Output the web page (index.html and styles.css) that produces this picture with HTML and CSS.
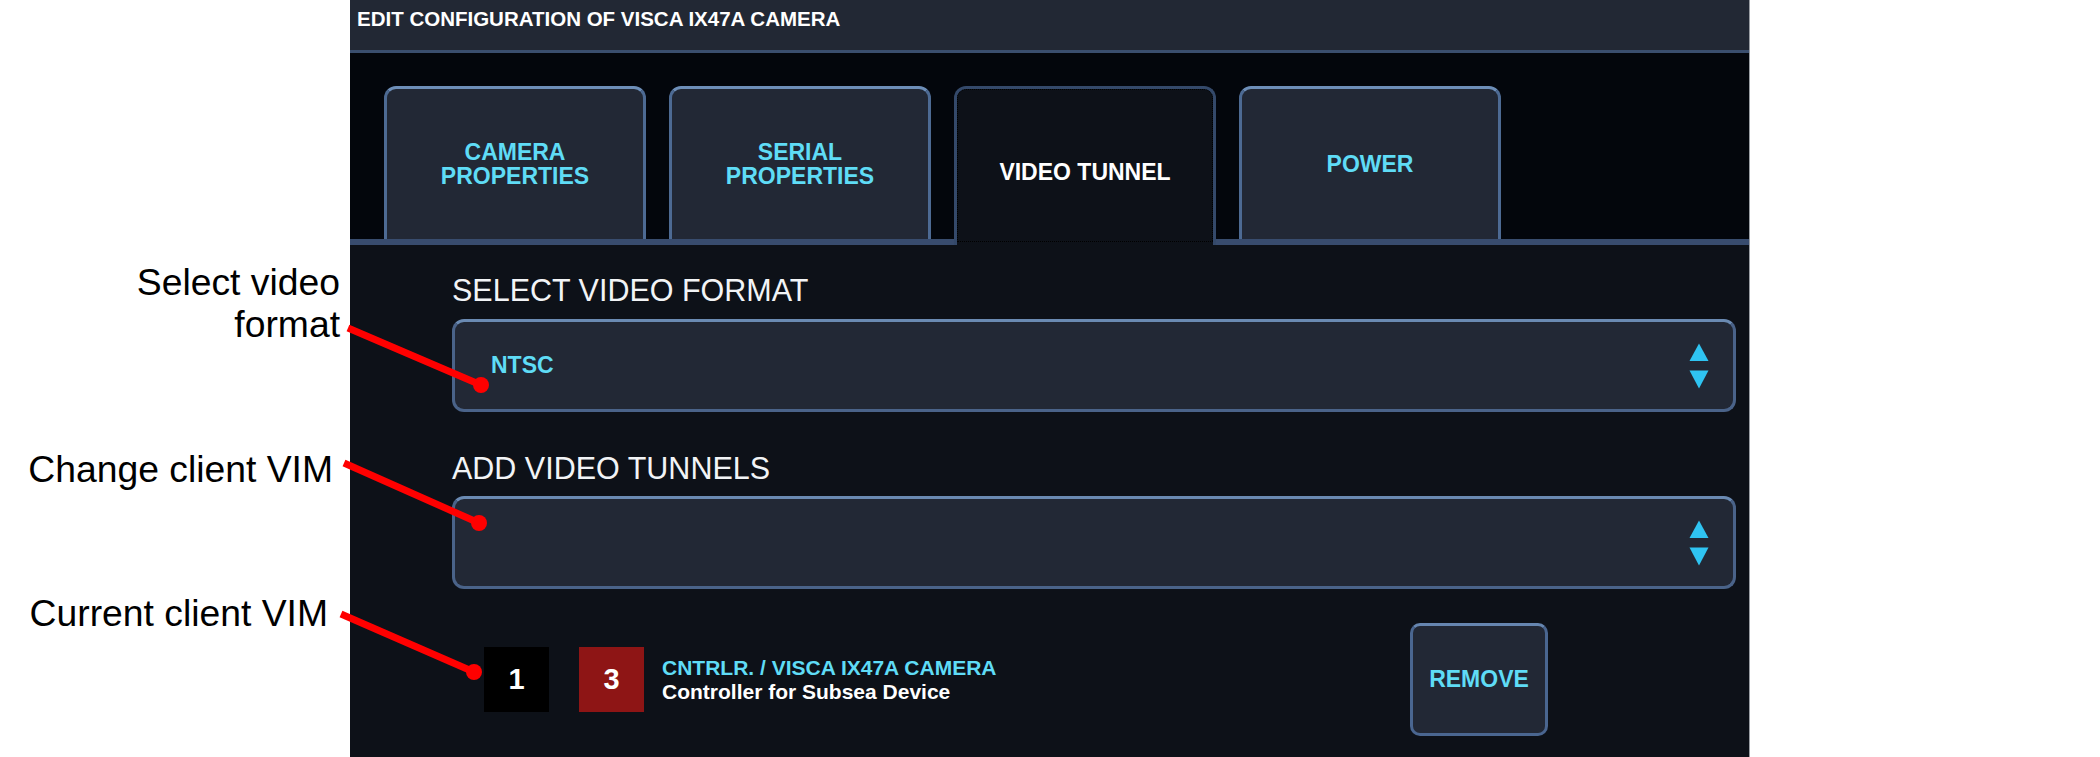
FILE: index.html
```html
<!DOCTYPE html>
<html lang="en">
<head>
<meta charset="utf-8">
<title>Edit configuration of VISCA IX47A camera</title>
<link rel="stylesheet" href="styles.css">
</head>
<body>
<div class="page">
  <div class="notes">
    <div class="note note-format">Select video<br>format</div>
    <div class="note note-change">Change client VIM</div>
    <div class="note note-current">Current client VIM</div>
  </div>

  <div class="panel">
    <div class="titlebar">EDIT CONFIGURATION OF VISCA IX47A CAMERA</div>

    <div class="tabstrip">
      <div class="tab">CAMERA<br>PROPERTIES</div>
      <div class="tab">SERIAL<br>PROPERTIES</div>
      <div class="tab active">VIDEO TUNNEL</div>
      <div class="tab">POWER</div>
    </div>

    <div class="content">
      <div class="field-label">SELECT VIDEO FORMAT</div>
      <div class="select">
        <span class="select-value">NTSC</span>
        <svg class="spinner" width="20" height="46" viewBox="0 0 20 46">
          <path d="M10 0.5 L19.5 18 L0.5 18 Z" />
          <path d="M0.5 27.5 L19.5 27.5 L10 45.5 Z" />
        </svg>
      </div>

      <div class="field-label second">ADD VIDEO TUNNELS</div>
      <div class="select">
        <span class="select-value"></span>
        <svg class="spinner" width="20" height="46" viewBox="0 0 20 46">
          <path d="M10 0.5 L19.5 18 L0.5 18 Z" />
          <path d="M0.5 27.5 L19.5 27.5 L10 45.5 Z" />
        </svg>
      </div>

      <div class="tunnel-row">
        <div class="num-box num-black">1</div>
        <div class="num-box num-red">3</div>
        <div class="tunnel-text">
          <div class="tunnel-name">CNTRLR. / VISCA IX47A CAMERA</div>
          <div class="tunnel-desc">Controller for Subsea Device</div>
        </div>
        <div class="remove-btn">REMOVE</div>
      </div>
    </div>
  </div>

  <svg class="callouts" width="2100" height="757" viewBox="0 0 2100 757">
    <line x1="348" y1="328" x2="481" y2="385" />
    <circle cx="481" cy="385" r="8" />
    <line x1="344" y1="463" x2="479" y2="523" />
    <circle cx="479" cy="523" r="8" />
    <line x1="341" y1="614" x2="474" y2="672" />
    <circle cx="474" cy="672" r="8" />
  </svg>
</div>
</body>
</html>
```

FILE: styles.css
```css
* {
  box-sizing: border-box;
}

html, body {
  margin: 0;
  padding: 0;
  background: #ffffff;
}

.page {
  position: relative;
  width: 2100px;
  height: 757px;
  display: flex;
  overflow: hidden;
  font-family: "Liberation Sans", Arial, sans-serif;
  background: #ffffff;
}

/* annotation column */
.notes {
  position: relative;
  width: 350px;
  flex: 0 0 350px;
}

.note {
  position: absolute;
  font-size: 37.3px;
  line-height: 41.5px;
  color: #000000;
  text-align: right;
  white-space: nowrap;
}

.note-format {
  right: 10px;
  top: 262px;
}

.note-change {
  right: 17px;
  top: 449px;
}

.note-current {
  right: 22px;
  top: 593px;
}

/* UI panel */
.panel {
  width: 1400px;
  flex: 0 0 1400px;
  height: 757px;
  display: flex;
  flex-direction: column;
  background: #0d1118;
  border-right: 1px solid #9a9ea4;
}

.titlebar {
  height: 53px;
  padding: 8px 0 0 7px;
  background: #222834;
  border-bottom: 3px solid #3a4e6e;
  color: #ffffff;
  font-size: 20.5px;
  font-weight: bold;
  line-height: 22px;
  white-space: nowrap;
}

.tabstrip {
  height: 192px;
  display: flex;
  align-items: flex-start;
  gap: 23px;
  padding: 33px 0 0 34px;
  background: #03060c;
  border-bottom: 6px solid #384c6e;
}

.tab {
  width: 262px;
  height: 153px;
  flex: 0 0 262px;
  display: flex;
  align-items: center;
  justify-content: center;
  text-align: center;
  background: #222835;
  border: 3px solid #4d6a93;
  border-top-color: #6d8eb8;
  border-bottom: none;
  border-radius: 12px 12px 0 0;
  color: #5fdcf6;
  font-size: 23px;
  font-weight: bold;
  line-height: 24px;
}

.tab.active {
  height: 159px;
  padding-top: 10px;
  background: #0d1118;
  border-color: #34496a;
  color: #ffffff;
  position: relative;
  outline: 1px dotted #000000;
  outline-offset: -4px;
}

.content {
  flex: 1;
  padding: 28px 13px 0 102px;
  display: flex;
  flex-direction: column;
}

.field-label {
  color: #f2f4f6;
  font-size: 30.5px;
  line-height: 34px;
  margin-bottom: 12px;
  white-space: nowrap;
}

.field-label.second {
  margin-top: 39px;
  margin-bottom: 11px;
}

.select {
  height: 93px;
  display: flex;
  align-items: center;
  justify-content: space-between;
  padding: 0 24px 0 36px;
  background: #222835;
  border: 3px solid #4a6389;
  border-top-color: #6a8ab2;
  border-radius: 12px;
}

.select-value {
  color: #5fdcf6;
  font-size: 23px;
  font-weight: bold;
}

.spinner {
  display: block;
  fill: #2fc4f2;
}

.tunnel-row {
  margin-top: 34px;
  height: 113px;
  display: flex;
  align-items: center;
  padding-left: 32px;
}

.num-box {
  width: 65px;
  height: 65px;
  flex: 0 0 65px;
  display: flex;
  align-items: center;
  justify-content: center;
  color: #ffffff;
  font-size: 29px;
  font-weight: bold;
}

.num-black {
  background: #000000;
}

.num-red {
  background: #8e1515;
  margin-left: 30px;
}

.tunnel-text {
  margin-left: 18px;
  font-size: 21px;
  font-weight: bold;
  line-height: 24px;
  white-space: nowrap;
}

.tunnel-name {
  color: #5fdcf6;
}

.tunnel-desc {
  color: #ffffff;
}

.remove-btn {
  margin-left: auto;
  margin-right: 188px;
  width: 138px;
  height: 113px;
  display: flex;
  align-items: center;
  justify-content: center;
  background: #222835;
  border: 3px solid #4a6690;
  border-top-color: #6686b0;
  border-radius: 10px;
  color: #5fdcf6;
  font-size: 23px;
  font-weight: bold;
}

/* red callout lines drawn over the page */
.callouts {
  position: absolute;
  top: 0;
  left: 0;
  pointer-events: none;
}

.callouts line {
  stroke: #ff0000;
  stroke-width: 7;
}

.callouts circle {
  fill: #ff0000;
}
```
